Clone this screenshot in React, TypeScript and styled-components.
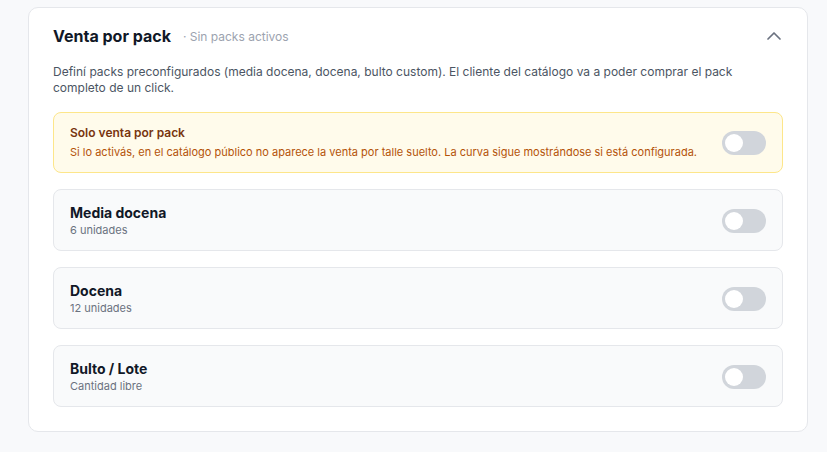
import React from "react";
import styled, { createGlobalStyle } from "styled-components";
import { ChevronUp } from "lucide-react";

const GlobalStyle = createGlobalStyle`
  * { box-sizing: border-box; }
  body {
    margin: 0;
    background: #f8f9fb;
    font-family: Inter, "Noto Sans", sans-serif;
    color: #111827;
  }
`;

type Pack = { name: string; detail: string };

const packs: Pack[] = [
  { name: "Media docena", detail: "6 unidades" },
  { name: "Docena", detail: "12 unidades" },
  { name: "Bulto / Lote", detail: "Cantidad libre" },
];

function App(): JSX.Element {
  return (
    <Page>
      <GlobalStyle />
      <Card>
        <Header>
          <TitleGroup>
            <Title>Venta por pack</Title>
            <Status>· Sin packs activos</Status>
          </TitleGroup>
          <ChevronUp size={24} strokeWidth={1.75} color="#6b7280" />
        </Header>
        <Body>
          <Description>
            Definí packs preconfigurados (media docena, docena, bulto custom). El cliente del
            catálogo va a poder comprar el pack completo de un click.
          </Description>
          <Option $tone="warning">
            <OptionText>
              <WarnTitle>Solo venta por pack</WarnTitle>
              <WarnDetail>
                Si lo activás, en el catálogo público no aparece la venta por talle suelto. La
                curva sigue mostrándose si está configurada.
              </WarnDetail>
            </OptionText>
            <Toggle aria-label="Solo venta por pack" />
          </Option>
          {packs.map((p) => (
            <Option key={p.name} $tone="neutral">
              <OptionText>
                <PackName>{p.name}</PackName>
                <PackDetail>{p.detail}</PackDetail>
              </OptionText>
              <Toggle aria-label={p.name} />
            </Option>
          ))}
        </Body>
      </Card>
    </Page>
  );
}

const Page = styled.div`
  padding: 7px 20px 20px 28px;
`;

const Card = styled.section`
  width: 780px;
  background: #ffffff;
  border: 1px solid #e5e7eb;
  border-radius: 10px;
`;

const Header = styled.div`
  display: flex;
  align-items: center;
  justify-content: space-between;
  padding: 16px 21px 16px 24px;
  height: 56px;
`;

const TitleGroup = styled.div`
  display: flex;
  align-items: center;
  gap: 12px;
`;

const Title = styled.h2`
  margin: 0;
  font-size: 16px;
  line-height: 24px;
  font-weight: 700;
  color: #111827;
`;

const Status = styled.span`
  font-size: 12px;
  color: #9ca3af;
`;

const Body = styled.div`
  display: flex;
  flex-direction: column;
  gap: 16px;
  padding: 0 24px 24px;
`;

const Description = styled.p`
  margin: 0;
  font-size: 12px;
  line-height: 16px;
  color: #4b5563;
`;

const Option = styled.div<{ $tone: "warning" | "neutral" }>`
  display: flex;
  align-items: center;
  justify-content: space-between;
  gap: 16px;
  border-radius: 8px;
  border: 1px solid ${(p) => (p.$tone === "warning" ? "#fde68a" : "#e5e7eb")};
  background: ${(p) => (p.$tone === "warning" ? "#fffbeb" : "#f9fafb")};
  padding: ${(p) => (p.$tone === "warning" ? "12px 16px" : "14px 16px 12px")};
`;

const OptionText = styled.div`
  display: flex;
  flex-direction: column;
`;

const WarnTitle = styled.div`
  font-size: 12px;
  line-height: 16px;
  font-weight: 600;
  color: #78350f;
`;

const WarnDetail = styled.div`
  margin-top: 3px;
  font-size: 11px;
  line-height: 16px;
  color: #b45309;
`;

const PackName = styled.div`
  font-size: 14px;
  line-height: 18px;
  font-weight: 700;
  color: #111827;
`;

const PackDetail = styled.div`
  font-size: 11px;
  line-height: 16px;
  color: #6b7280;
`;

const Toggle = styled.button`
  position: relative;
  flex-shrink: 0;
  width: 44px;
  height: 24px;
  padding: 0;
  border: none;
  border-radius: 12px;
  background: #d1d5db;
  cursor: pointer;

  &::after {
    content: "";
    position: absolute;
    top: 3px;
    left: 3px;
    width: 18px;
    height: 18px;
    border-radius: 50%;
    background: #ffffff;
  }
`;

export default App;
